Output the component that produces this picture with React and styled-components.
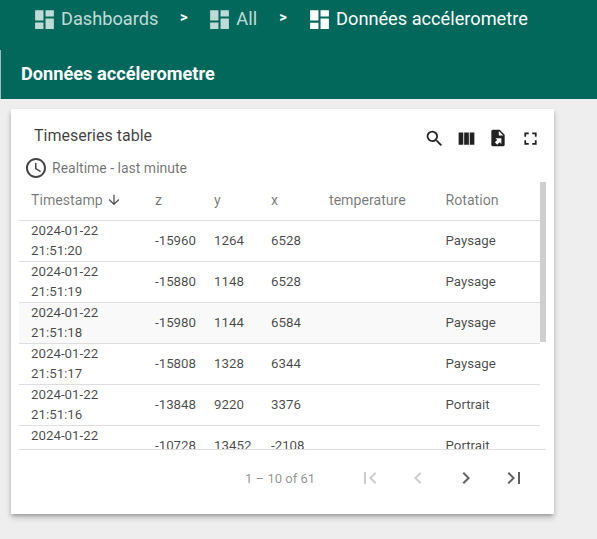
import React from "react";
import styled, { createGlobalStyle } from "styled-components";
import {
  MdSearch,
  MdViewColumn,
  MdFullscreen,
  MdFirstPage,
  MdLastPage,
  MdChevronLeft,
  MdChevronRight,
  MdArrowDownward,
  MdAccessTime,
  MdDashboard,
} from "react-icons/md";

const Global = createGlobalStyle`
  html, body { margin: 0; padding: 0; background: #eeeeee; }
  body { font-family: Roboto, "Liberation Sans", sans-serif; overflow: hidden; }
  * { box-sizing: border-box; }
`;

const Page = styled.div`
  width: 597px;
  height: 539px;
  overflow: hidden;
`;

const Crumbs = styled.nav`
  height: 50px;
  background: #02685b;
  display: flex;
  align-items: flex-start;
  padding: 5px 0 0 32px;
  color: #fff;
`;

const Crumb = styled.div`
  display: flex;
  align-items: center;
  height: 24px;
  gap: 4px;
  font-size: 18.2px;
  margin-top: 1px;
  opacity: ${(p) => (p.$active ? 1 : 0.75)};
  svg { flex: none; margin-top: 2px; }
`;

const Sep = styled.span`
  width: ${(p) => p.$w}px;
  padding-left: 2px;
  text-align: center;
  font-size: 15px;
  font-weight: 700;
  line-height: 24px;
`;

const TitleBar = styled.header`
  height: 49px;
  background: #02685b;
  border-left: 1px solid #9fbdb8;
  padding: 13px 0 0 20px;
  color: #fff;
  font-size: 18.2px;
  font-weight: 700;
  line-height: 21px;
`;

const Card = styled.section`
  width: 543px;
  height: 405px;
  margin: 10px 0 0 11px;
  background: #fff;
  box-shadow: 0 2px 4px -1px rgba(0, 0, 0, 0.3), 0 4px 6px rgba(0, 0, 0, 0.16);
  display: flex;
  flex-direction: column;
`;

const CardHead = styled.div`
  height: 44px;
  padding: 16px 8px 0 23px;
  display: flex;
  align-items: flex-start;
  justify-content: space-between;
`;

const CardTitle = styled.h2`
  margin: 0;
  font-size: 16px;
  font-weight: 400;
  line-height: 22px;
  color: rgba(0, 0, 0, 0.76);
`;

const Tools = styled.div`
  display: flex;
  color: #212121;
`;

const ToolButton = styled.span`
  width: 32px;
  height: 26px;
  display: flex;
  align-items: center;
  justify-content: center;
`;

const Timewindow = styled.div`
  height: 29px;
  display: flex;
  align-items: center;
  gap: 4px;
  padding-left: 13px;
  font-size: 14px;
  color: rgba(0, 0, 0, 0.56);
  svg { color: #444; flex: none; }
`;

const TableWrap = styled.div`
  position: relative;
  margin-left: 8px;
  width: 527px;
  height: 268px;
  overflow: hidden;
  border-bottom: 1px solid #dedede;
`;

const Row = styled.div`
  width: 521px;
  display: grid;
  grid-template-columns: 124px 59px 57px 58px 116.5px 106.5px;
  height: ${(p) => (p.$head ? 39 : 41)}px;
  align-items: center;
  border-bottom: 1px solid #dedede;
  padding-bottom: ${(p) => (p.$head ? 2 : 0)}px;
  background: ${(p) => (p.$hover ? "#f9f9f9" : "transparent")};
`;

const HeadCell = styled.div`
  padding-left: 12px;
  font-size: 14.15px;
  font-weight: 400;
  color: rgba(0, 0, 0, 0.54);
  display: flex;
  align-items: center;
  gap: 3px;
  svg { flex: none; color: #555; }
`;

const Cell = styled.div`
  padding-left: 12px;
  font-size: 13.3px;
  line-height: 20px;
  color: rgba(0, 0, 0, 0.72);
  white-space: pre-line;
`;

const Thumb = styled.div`
  position: absolute;
  top: 0;
  right: 0;
  width: 6px;
  height: 160px;
  background: #cfcfcf;
`;

const Pager = styled.footer`
  display: flex;
  align-items: center;
  justify-content: flex-end;
  height: 56px;
  padding: 0 16px 0 0;
  color: rgba(0, 0, 0, 0.54);
`;

const Range = styled.span`
  font-size: 13px;
  color: rgba(0, 0, 0, 0.46);
  margin-right: 31px;
`;

const PageButton = styled.span`
  width: 48px;
  height: 48px;
  display: flex;
  align-items: center;
  justify-content: center;
  color: ${(p) => (p.$off ? "rgba(0,0,0,0.2)" : "rgba(0,0,0,0.62)")};
`;

const FileExport = () => (
  <svg width="20" height="20" viewBox="0 0 24 24" fill="currentColor">
    <path d="M6,2C4.89,2 4,2.9 4,4V20A2,2 0 0,0 6,22H18A2,2 0 0,0 20,20V8L14,2M13,3.5L18.5,9H13M8.93,12.22H16V19.29L13.88,17.17L11.05,20L8.22,17.17L11.05,14.35" />
  </svg>
);

const rows = [
  ["2024-01-22\n21:51:20", "-15960", "1264", "6528", "", "Paysage"],
  ["2024-01-22\n21:51:19", "-15880", "1148", "6528", "", "Paysage"],
  ["2024-01-22\n21:51:18", "-15980", "1144", "6584", "", "Paysage"],
  ["2024-01-22\n21:51:17", "-15808", "1328", "6344", "", "Paysage"],
  ["2024-01-22\n21:51:16", "-13848", "9220", "3376", "", "Portrait"],
  ["2024-01-22\n21:51:15", "-10728", "13452", "-2108", "", "Portrait"],
];

export default function App() {
  return (
    <Page>
      <Global />
      <Crumbs>
        <Crumb>
          <MdDashboard size={25} />
          Dashboards
        </Crumb>
        <Sep $w={49}>&gt;</Sep>
        <Crumb>
          <MdDashboard size={25} />
          All
        </Crumb>
        <Sep $w={50}>&gt;</Sep>
        <Crumb $active>
          <MdDashboard size={25} />
          Données accélerometre
        </Crumb>
      </Crumbs>
      <TitleBar>Données accélerometre</TitleBar>
      <Card>
        <CardHead>
          <CardTitle>Timeseries table</CardTitle>
          <Tools>
            <ToolButton><MdSearch size={21} /></ToolButton>
            <ToolButton><MdViewColumn size={21} /></ToolButton>
            <ToolButton><FileExport /></ToolButton>
            <ToolButton><MdFullscreen size={21} /></ToolButton>
          </Tools>
        </CardHead>
        <Timewindow>
          <MdAccessTime size={24} />
          Realtime - last minute
        </Timewindow>
        <TableWrap>
          <Row $head>
            <HeadCell>Timestamp <MdArrowDownward size={16} /></HeadCell>
            <HeadCell>z</HeadCell>
            <HeadCell>y</HeadCell>
            <HeadCell>x</HeadCell>
            <HeadCell>temperature</HeadCell>
            <HeadCell>Rotation</HeadCell>
          </Row>
          {rows.map((r, i) => (
            <Row key={i} $hover={i === 2}>
              {r.map((c, j) => (
                <Cell key={j}>{c}</Cell>
              ))}
            </Row>
          ))}
          <Thumb />
        </TableWrap>
        <Pager>
          <Range>1 – 10 of 61</Range>
          <PageButton $off><MdFirstPage size={24} /></PageButton>
          <PageButton $off><MdChevronLeft size={24} /></PageButton>
          <PageButton><MdChevronRight size={24} /></PageButton>
          <PageButton><MdLastPage size={24} /></PageButton>
        </Pager>
      </Card>
    </Page>
  );
}
